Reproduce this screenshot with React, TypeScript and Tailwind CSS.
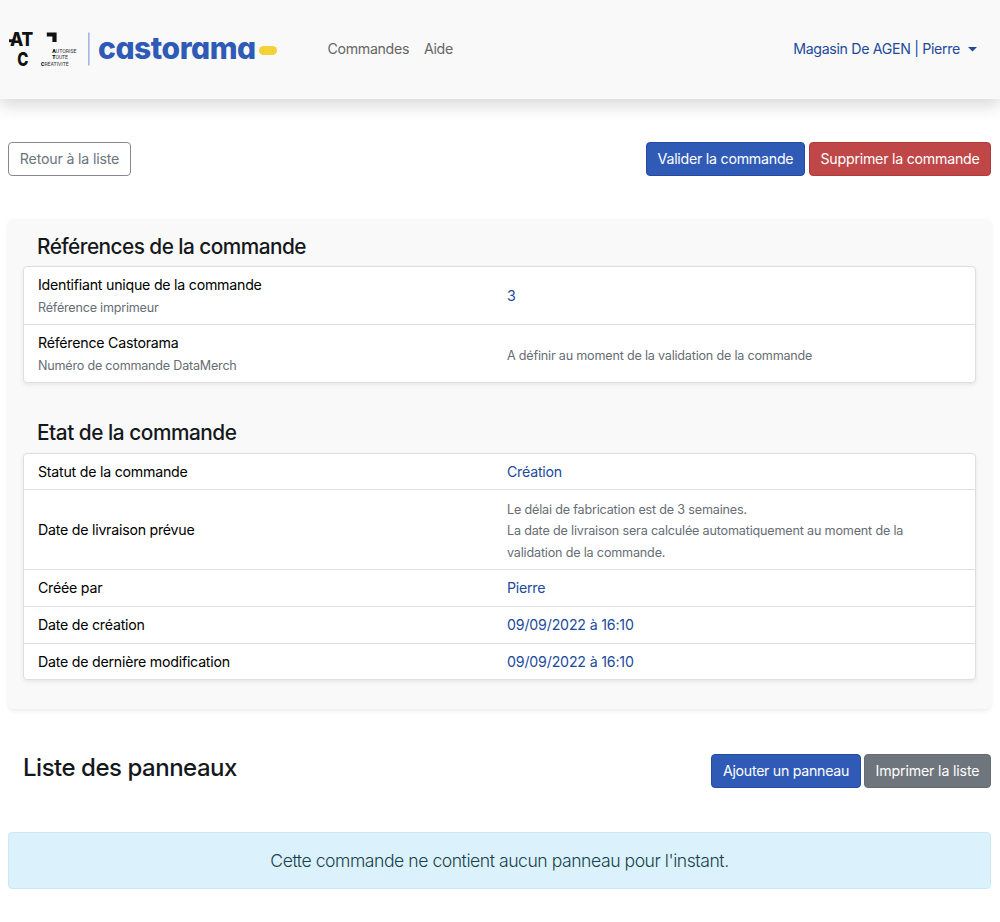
import type { ReactNode } from "react";

function Logo() {
  return (
    <div className="flex h-10 w-[272px] items-center" aria-label="Castorama">
      <svg width="84" height="40" viewBox="0 0 84 40" className="block shrink-0">
        <g fill="#111" fontFamily="Inter, sans-serif" fontWeight="800">
          <text x="2" y="16.2" fontSize="19" textLength="23" lengthAdjust="spacingAndGlyphs">AT</text>
          <text x="9.2" y="35.6" fontSize="19" textLength="11" lengthAdjust="spacingAndGlyphs">C</text>
        </g>
        <path d="M1 9.2H5V12.2H1Z M38.8 2.6H48.6V12H44.4V6.6H38.8Z" fill="#111" />
        <g fill="#333" fontFamily="Roboto, sans-serif" fontSize="5.2">
          <text x="44.3" y="22.6" textLength="24" lengthAdjust="spacing"><tspan fontWeight="900" fill="#000">A</tspan>UTORISE</text>
          <text x="44.3" y="29.2" textLength="15.5" lengthAdjust="spacing"><tspan fontWeight="900" fill="#000">T</tspan>OUTE</text>
          <text x="33" y="35.6" textLength="27.5" lengthAdjust="spacing"><tspan fontWeight="900" fill="#000">C</tspan>RÉATIVITÉ</text>
        </g>
        <rect x="80" y="2.5" width="1.6" height="33" fill="#a3b7e0" />
      </svg>
      <span className="mb-[3px] ml-[6px] w-[158px] shrink-0 text-[30px] leading-[38px] font-extrabold tracking-[-0.45px] whitespace-nowrap text-[#2f5bb7] [font-feature-settings:'cv11']">
        castorama
      </span>
      <span className="mt-[2px] ml-[3px] h-[9px] w-[18px] shrink-0 rounded-full bg-[#f3d237]" />
    </div>
  );
}

function Button({ className, children }: { className: string; children: ReactNode }) {
  return (
    <button className={`flex h-[34px] items-center justify-center rounded-[4px] border whitespace-nowrap ${className}`}>
      {children}
    </button>
  );
}

function Small({ className = "pt-px tracking-[-0.22px]", children }: { className?: string; children: ReactNode }) {
  return <div className={`text-[12.6px] leading-[21.6px] text-[#676d74] ${className}`}>{children}</div>;
}

function Row({ height, label, hint, children }: { height: string; label: string; hint?: string; children: ReactNode }) {
  return (
    <div className={`flex items-center px-[14px] ${height}`}>
      <div className={hint ? "w-[469px] shrink-0 pt-[2px]" : "w-[469px] shrink-0"}>
        <div className="text-black">{label}</div>
        {hint && <Small>{hint}</Small>}
      </div>
      <div className="w-[440px] text-[#214a9c]">{children}</div>
    </div>
  );
}

function List({ children }: { children: ReactNode }) {
  return (
    <div className="divide-y divide-[#e0e0e0] rounded-[4px] border border-[#dfdfdf] bg-white shadow-[0_2px_4px_rgba(0,0,0,0.075)]">
      {children}
    </div>
  );
}

export default function App() {
  return (
    <div className="h-[922px] overflow-hidden bg-white font-['Inter',sans-serif] text-[14.2px] leading-[22px] tracking-[-0.24px] text-[#212529]">
      <header className="flex h-[99px] items-center bg-[#f9f9f9] px-2 shadow-[0_7px_15px_rgba(0,0,0,0.15)]">
        <Logo />
        <nav className="mb-px ml-[47.5px] flex gap-[15px] text-[#666]">
          <a className="tracking-[-0.33px]">Commandes</a>
          <a className="tracking-[-0.37px]">Aide</a>
        </nav>
        <div className="mr-[15px] mb-px ml-auto flex items-center gap-2 text-[#214a9c]">
          <span className="tracking-[-0.33px]">Magasin De AGEN | Pierre</span>
          <svg width="9" height="5" viewBox="0 0 9 5"><path d="M0 0H9L4.5 4.5Z" fill="#214a9c" /></svg>
        </div>
      </header>

      <main className="pt-[43px] pr-[9px] pl-2">
        <div className="flex justify-between">
          <Button className="w-[123px] border-[#868a90] text-[#6c757d] tracking-[-0.18px]">Retour à la liste</Button>
          <div className="flex gap-1">
            <Button className="w-[159px] border-[#234a9f] bg-[#2f5bb7] text-white">Valider la commande</Button>
            <Button className="w-[182px] border-[#b23a3a] bg-[#c04747] text-white">Supprimer la commande</Button>
          </div>
        </div>

        <section className="mt-[43px] h-[490px] rounded-[6px] bg-[#f9f9f9] px-[15px] pt-[14px] shadow-[0_2px_4px_rgba(0,0,0,0.075)]">
          <h2 className="mb-[6px] pl-[14px] text-[20.8px] leading-[27px] font-medium tracking-[-0.54px] text-[#15181b]">Références de la commande</h2>
          <List>
            <Row height="h-[58px]" label="Identifiant unique de la commande" hint="Référence imprimeur">3</Row>
            <Row height="h-[57px]" label="Référence Castorama" hint="Numéro de commande DataMerch">
              <Small className="pt-[4px] tracking-[-0.2px]">A définir au moment de la validation de la commande</Small>
            </Row>
          </List>

          <h2 className="mt-[36px] mb-[7px] pl-[14px] text-[20.8px] leading-[27px] font-medium tracking-[-0.46px] text-[#15181b]">Etat de la commande</h2>
          <List>
            <Row height="h-[36px]" label="Statut de la commande">Création</Row>
            <Row height="h-[80px]" label="Date de livraison prévue">
              <Small className="pt-[3px] tracking-[-0.18px]">
                Le délai de fabrication est de 3 semaines.
                <br />
                La date de livraison sera calculée automatiquement au moment de la
                <br />
                validation de la commande.
              </Small>
            </Row>
            <Row height="h-[37px]" label="Créée par">Pierre</Row>
            <Row height="h-[37px]" label="Date de création"><span className="tracking-[-0.18px]">09/09/2022 à 16:10</span></Row>
            <Row height="h-[35px]" label="Date de dernière modification"><span className="tracking-[-0.18px]">09/09/2022 à 16:10</span></Row>
          </List>
        </section>

        <div className="mt-[45px] flex justify-between pl-[15px]">
          <h1 className="-mt-px text-[24px] leading-[29px] font-medium tracking-[-0.48px] text-[#15181b]">Liste des panneaux</h1>
          <div className="flex gap-[3px]">
            <Button className="w-[150px] border-[#234a9f] bg-[#2f5bb7] text-white tracking-[-0.29px]">Ajouter un panneau</Button>
            <Button className="w-[127px] border-[#646b73] bg-[#6f757d] text-white tracking-[-0.16px]">Imprimer la liste</Button>
          </div>
        </div>

        <div className="mt-[44px] flex h-[57px] items-center justify-center rounded-[4px] border border-[#c9eaf5] bg-[#dbf2fc] pt-px text-[17.6px] font-light tracking-[-0.46px] text-[#173f4d]">
          Cette commande ne contient aucun panneau pour l'instant.
        </div>
      </main>
    </div>
  );
}
